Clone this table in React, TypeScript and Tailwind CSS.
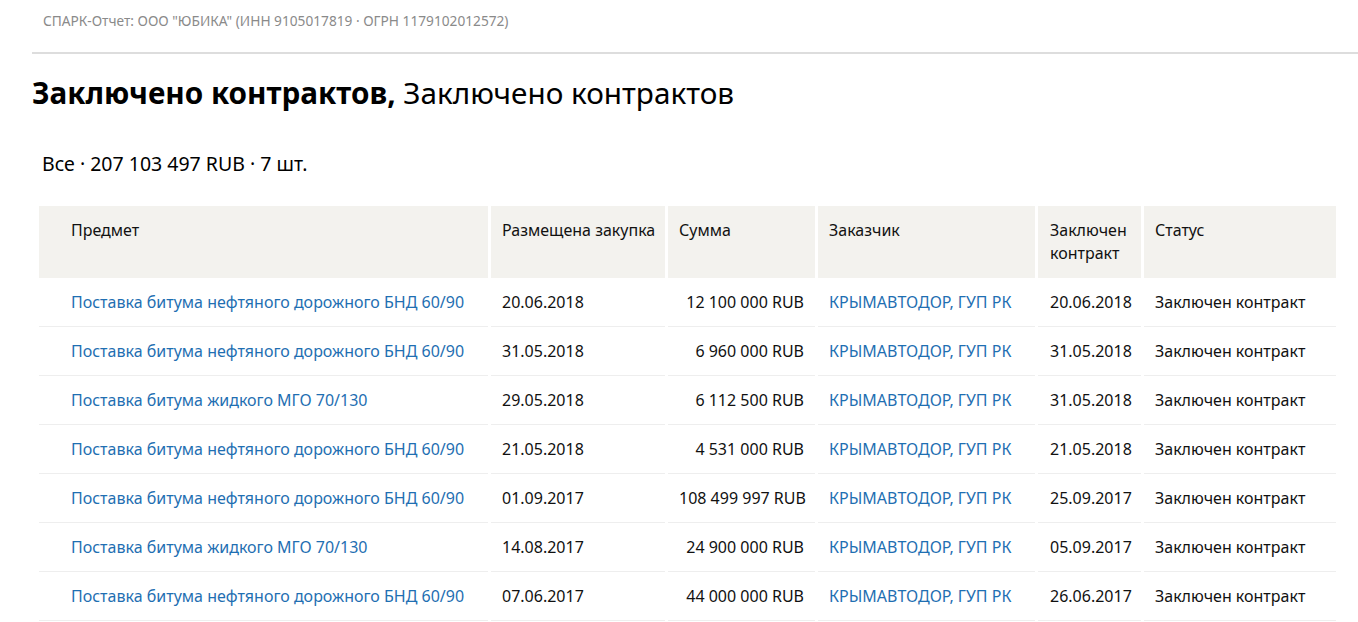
const rows = [
  ["Поставка битума нефтяного дорожного БНД 60/90", "20.06.2018", "12 100 000 RUB", "20.06.2018"],
  ["Поставка битума нефтяного дорожного БНД 60/90", "31.05.2018", "6 960 000 RUB", "31.05.2018"],
  ["Поставка битума жидкого МГО 70/130", "29.05.2018", "6 112 500 RUB", "31.05.2018"],
  ["Поставка битума нефтяного дорожного БНД 60/90", "21.05.2018", "4 531 000 RUB", "21.05.2018"],
  ["Поставка битума нефтяного дорожного БНД 60/90", "01.09.2017", "108 499 997 RUB", "25.09.2017"],
  ["Поставка битума жидкого МГО 70/130", "14.08.2017", "24 900 000 RUB", "05.09.2017"],
  ["Поставка битума нефтяного дорожного БНД 60/90", "07.06.2017", "44 000 000 RUB", "26.06.2017"],
];

const th = "bg-[#f3f2ee] align-top font-normal text-left px-[11px] pt-[13px] pb-[13px] leading-[23px] whitespace-nowrap";
const td = "px-[11px] h-[49px] border-b border-[#eeeeee] align-middle whitespace-nowrap";

export default function App() {
  return (
    <div className="min-h-screen bg-white text-[#111] font-['Noto_Sans',sans-serif]">
      <div className="pl-[32px]">
        <div className="pl-[11px] pt-[11px] pb-[20px] text-[13.7px] text-[#8a8a8a] border-b-2 border-[#dddddd]">
          СПАРК-Отчет: ООО "ЮБИКА" (ИНН 9105017819 · ОГРН 1179102012572)
        </div>
        <h1 className="mt-[19px] text-[29.7px] leading-[40px] text-black">
          <span className="font-bold">Заключено контрактов,</span> Заключено контрактов
        </h1>
        <div className="mt-[36px] pl-[10px] text-[19.5px] text-black">Все · 207 103 497 RUB · 7 шт.</div>
      </div>
      <div className="pl-[36px] mt-[28px]">
        <table className="w-[1303px] table-fixed border-separate border-spacing-x-[3px] border-spacing-y-0 text-[16px]">
          <colgroup>
            <col className="w-[449px]" />
            <col className="w-[174px]" />
            <col className="w-[147px]" />
            <col className="w-[217px]" />
            <col className="w-[103px]" />
            <col className="w-[192px]" />
          </colgroup>
          <thead>
            <tr className="h-[72px]">
              <th className={th + " pl-[32px]"}>Предмет</th>
              <th className={th}>Размещена закупка</th>
              <th className={th}>Сумма</th>
              <th className={th}>Заказчик</th>
              <th className={th + " pl-[12px]"}>Заключен<br />контракт</th>
              <th className={th}>Статус</th>
            </tr>
          </thead>
          <tbody>
            {rows.map((r, i) => (
              <tr key={i}>
                <td className={td + " pl-[32px] text-[#1f6fb2]"}>{r[0]}</td>
                <td className={td}>{r[1]}</td>
                <td className={td + " text-right"}>{r[2]}</td>
                <td className={td + " text-[#1f6fb2]"}>КРЫМАВТОДОР, ГУП РК</td>
                <td className={td + " pl-[12px]"}>{r[3]}</td>
                <td className={td}>Заключен контракт</td>
              </tr>
            ))}
          </tbody>
        </table>
      </div>
    </div>
  );
}
